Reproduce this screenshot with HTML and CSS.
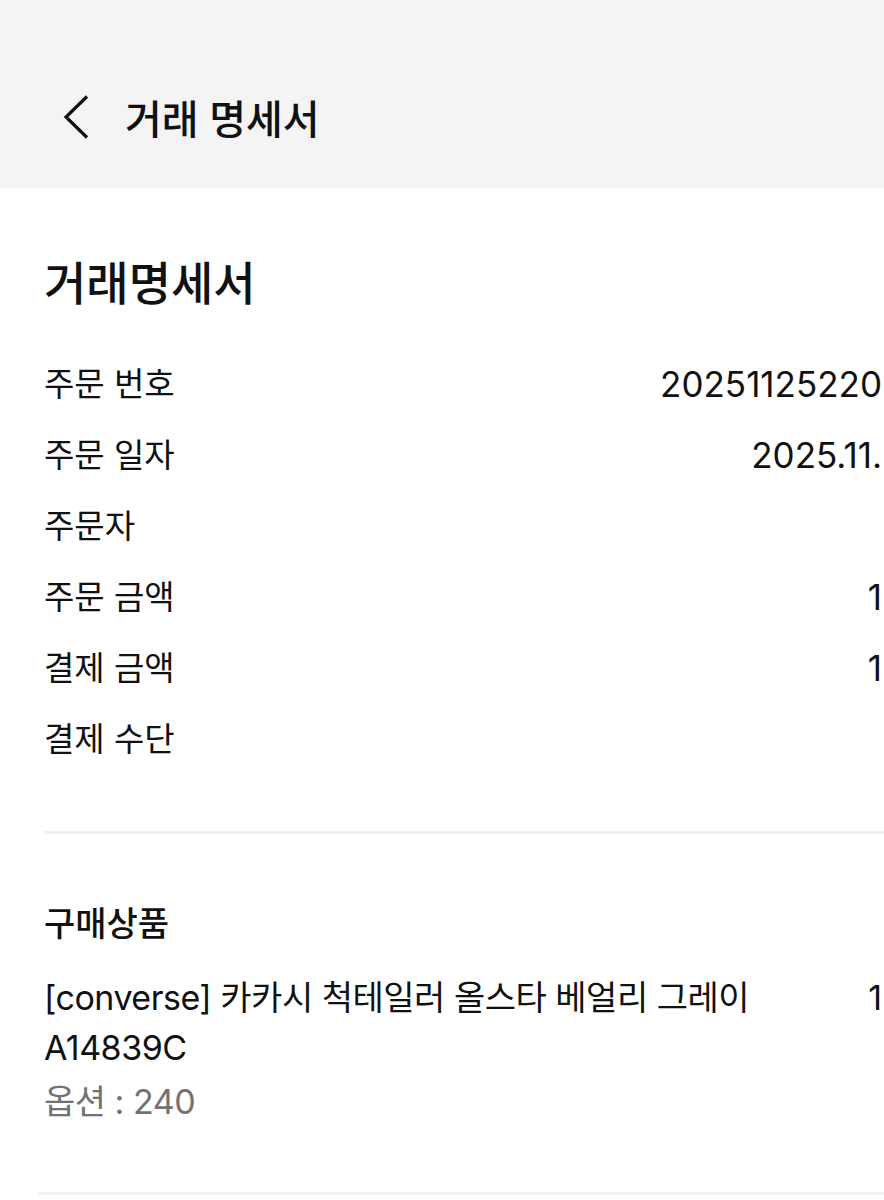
FILE: index.html
```html
<!DOCTYPE html>
<html lang="ko">
<head>
<meta charset="utf-8">
<title>거래 명세서</title>
<link rel="stylesheet" href="styles.css">
</head>
<body>
<header class="topbar">
	<a href="#" class="back" aria-label="뒤로">
		<svg width="26" height="44" viewBox="0 0 26 44"><path d="M24 1.5 L3 22 L24 42.5" fill="none" stroke="#111" stroke-width="3.2"/></svg>
	</a>
	<h1>거래 명세서</h1>
</header>

<div id="corps">
	<section class="bloc">
		<h2 class="titre">거래명세서</h2>
		<ul class="lignes">
			<li><span>주문 번호</span><span class="valeur">20251125220</span></li>
			<li><span>주문 일자</span><span class="valeur">2025.11.</span></li>
			<li><span>주문자</span><span class="valeur"></span></li>
			<li><span>주문 금액</span><span class="valeur">1</span></li>
			<li><span>결제 금액</span><span class="valeur">1</span></li>
			<li><span>결제 수단</span><span class="valeur"></span></li>
		</ul>
	</section>

	<section class="bloc produits">
		<h3>구매상품</h3>
		<div class="produit">
			<div class="nom">
				<p>[converse] 카카시 척테일러 올스타 베얼리 그레이<br>A14839C</p>
				<p class="option">옵션 : 240</p>
			</div>
			<span class="qte">1</span>
		</div>
	</section>
</div>
</body>
</html>
```

FILE: styles.css
```css
html,body,ul,li,h1,h2,h3,p {
	margin:0;
	padding:0;
}
body {
	width:884px;
	overflow:hidden;
	background:#fff;
	color:#111;
	font-family: Inter, "Noto Sans CJK KR", sans-serif;
}
.topbar {
	height:188px;
	box-sizing:border-box;
	padding:46px 0 0 63px;
	display:flex;
	align-items:center;
	gap:36px;
	background:#f4f4f4;
}
.back {
	display:flex;
}
.topbar h1 {
	font-size:40px;
	font-weight:500;
}
#corps {
	padding-left:44px;
}
.bloc {
	padding-top:63px;
	padding-right:2px;
	padding-bottom:56px;
	border-bottom:3px solid #f2f2f2;
}
.titre {
	font-size:46px;
	font-weight:500;
	line-height:64px;
	margin-bottom:34px;
}
ul.lignes {
	list-style:none;
}
ul.lignes li {
	display:flex;
	justify-content:space-between;
	height:71px;
	line-height:71px;
	font-size:33px;
}
ul.lignes .valeur {
	font-size:35px;
}
.produits {
	padding-top:66px;
	padding-bottom:65px;
	margin-left:-6px;
	padding-left:6px;
}
.produits h3 {
	font-size:34px;
	font-weight:500;
	line-height:48px;
	margin-bottom:25px;
}
.produit {
	display:flex;
	justify-content:space-between;
	font-size:34px;
	line-height:50px;
}
.nom {
	letter-spacing:-0.5px;
}
.option {
	color:#727272;
	margin-top:4px;
}
```
